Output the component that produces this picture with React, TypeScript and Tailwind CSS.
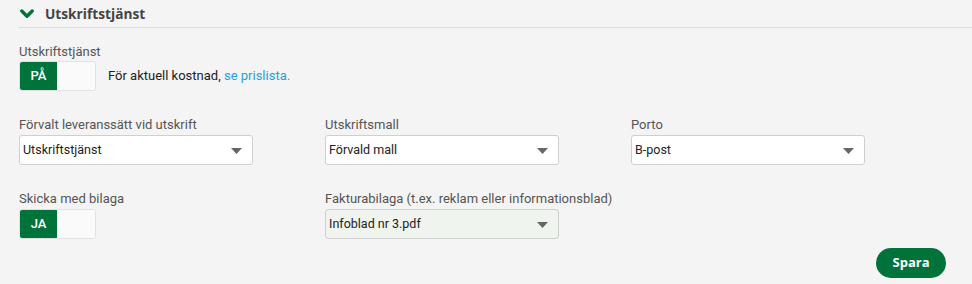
import { useState } from 'react'

function Toggle({ label, on }: { label: string; on: boolean }) {
  return (
    <div className="flex h-[30px] w-[77px] rounded-[3px] border border-[#e2e2e2] bg-white overflow-hidden">
      <div className={`w-[37px] flex items-center justify-center text-[13px] font-medium text-white ${on ? 'bg-[#00733a]' : 'bg-white'}`}>
        {label}
      </div>
      <div className="flex-1 bg-[#fafafa]" />
    </div>
  )
}

function Select({ value, tinted }: { value: string; tinted?: boolean }) {
  return (
    <div className={`h-[30px] w-[234px] flex items-center justify-between pl-[3px] pr-[10px] rounded-[3px] border border-[#cfcfcf] text-[12.5px] text-[#222] ${tinted ? 'bg-[#f0f4ef]' : 'bg-white'}`}>
      <span>{value}</span>
      <svg width="11" height="6" viewBox="0 0 11 6" className="mt-[2px]"><path d="M0 0 H11 L5.5 6 Z" fill="#666" /></svg>
    </div>
  )
}

function Field({ label, children }: { label: string; children: React.ReactNode }) {
  return (
    <div className="w-[306px] flex flex-col">
      <label className="text-[13px] text-[#555] leading-[16px] mb-[2px]">{label}</label>
      {children}
    </div>
  )
}

export default function App() {
  const [open] = useState(true)
  return (
    <div className="w-[972px] h-[284px] bg-[#f4f4f4] pl-[19px] font-['Roboto',sans-serif] text-[#333]">
      <div className="flex items-center gap-[11px] h-[28px] pt-[1px] border-b border-[#dedede]">
        <svg width="14" height="10" viewBox="0 0 14 10" className={`ml-[1px] ${open ? '' : '-rotate-90'}`}>
          <path d="M1.8 2 L7 7.2 L12.2 2" fill="none" stroke="#00733a" strokeWidth="3.4" strokeLinecap="round" strokeLinejoin="round" />
        </svg>
        <h2 className="text-[13.7px] font-bold text-[#444] font-['Open_Sans',sans-serif]">Utskriftstjänst</h2>
      </div>

      <div className="mt-[16px]">
        <label className="block text-[13px] text-[#555] leading-[16px] mb-[1px]">Utskriftstjänst</label>
        <div className="flex items-center gap-[12px]">
          <Toggle label="PÅ" on />
          <p className="text-[13px] text-[#222]">
            För aktuell kostnad, <a className="text-[#2a9fd8]">se prislista.</a>
          </p>
        </div>
      </div>

      <div className="flex mt-[26px]">
        <Field label="Förvalt leveranssätt vid utskrift"><Select value="Utskriftstjänst" /></Field>
        <Field label="Utskriftsmall"><Select value="Förvald mall" /></Field>
        <Field label="Porto"><Select value="B-post" /></Field>
      </div>

      <div className="flex mt-[26px]">
        <Field label="Skicka med bilaga"><Toggle label="JA" on /></Field>
        <Field label="Fakturabilaga (t.ex. reklam eller informationsblad)"><Select value="Infoblad nr 3.pdf" tinted /></Field>
      </div>

      <div className="flex justify-end pr-[26px] mt-[9px]">
        <button className="h-[30px] w-[70px] rounded-full bg-[#00733a] text-white text-[13px] font-bold font-['Open_Sans',sans-serif]">
          Spara
        </button>
      </div>
    </div>
  )
}
